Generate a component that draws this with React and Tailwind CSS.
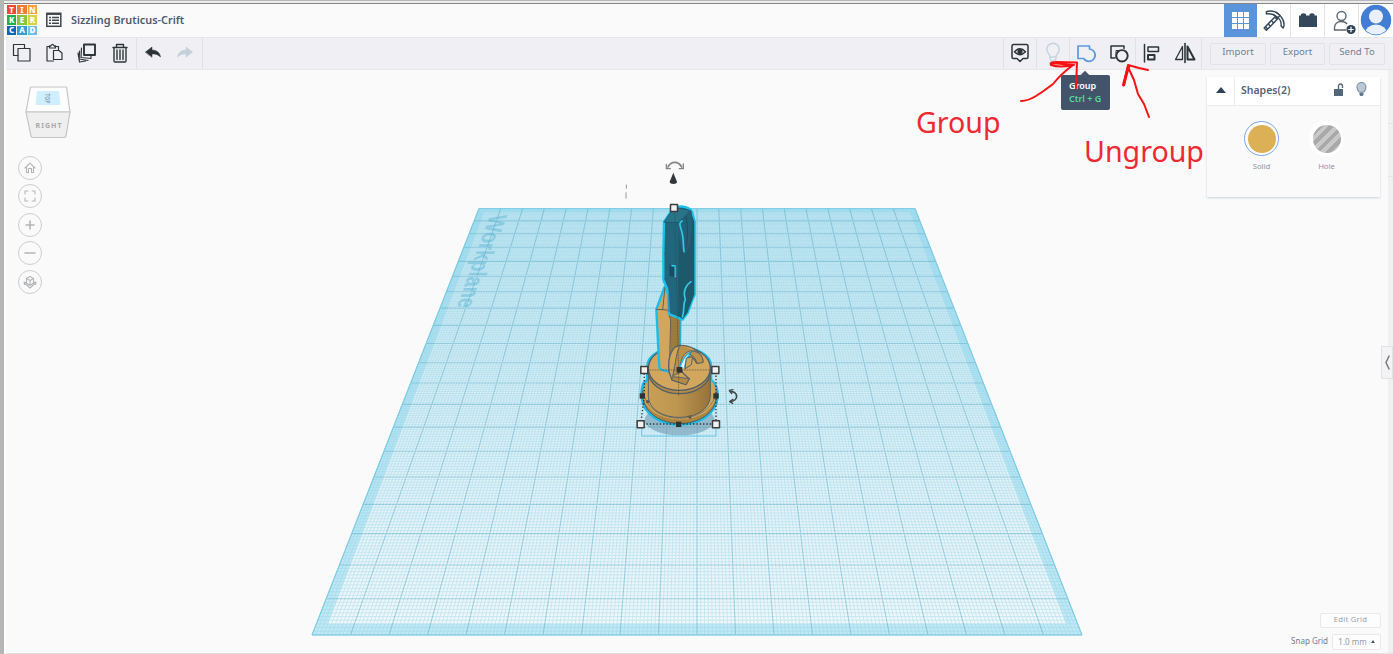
import React from "react";

const FAR_W = 770 / 436;

function project(u, t) {
  const w = FAR_W * (1 - t) + t;
  const y = (FAR_W * 208.5 * (1 - t) + 635 * t) / w;
  const k = (y - 208.5) / 426.5;
  const left = 479 - 167 * k;
  const right = 915 + 167 * k;
  return [(left + (right - left) * u).toFixed(2), y.toFixed(2)];
}

function linesPath(step, skip) {
  let d = "";
  for (let i = 0; i <= 200; i += step) {
    if (skip && i % skip === 0) continue;
    const f = i / 200;
    d += `M${project(f, 0).join(" ")}L${project(f, 1).join(" ")}`;
    d += `M${project(0, f).join(" ")}L${project(1, f).join(" ")}`;
  }
  return d;
}

const quad = (a, b) =>
  "M" + [project(a, a), project(b, a), project(b, b), project(a, b)].map((p) => p.join(" ")).join("L") + "Z";

const MINOR = linesPath(1, 10);
const MAJOR = linesPath(10, 0);
const OUTER = quad(0, 1);
const INNER = quad(0.015, 0.985);

function Handle({ x, y }) {
  return <rect x={x - 10.5} y={y - 10.5} width="21" height="21" fill="#f1f1f1" stroke="#3c3c3c" strokeWidth="4.5" />;
}

function Arm() {
  return (
    <g transform="translate(600 150) scale(.33333)" strokeLinejoin="round" strokeLinecap="round">
      <ellipse cx="239" cy="810" rx="105" ry="46" fill="#6d9ab0" opacity=".6" />
      <path d="M125 822V858H348V822" fill="none" stroke="#5fc6e8" strokeWidth="3" />
      {/* base flange and turntable */}
      <path d="M126 725C126 705 135 695 143 690V650C143 575 333 575 332 650V690C345 700 352 715 352 738C345 850 132 850 126 738Z" fill="#c99b49" stroke="#19bde9" strokeWidth="10" />
      <path d="M128 738C137 848 342 848 350 738V724C342 835 136 835 128 724Z" fill="#ad843d" stroke="#4f5a62" strokeWidth="3" />
      <ellipse cx="239" cy="732" rx="111" ry="77" fill="#d3a556" />
      <path d="M129 715C132 835 346 835 349 715" fill="none" stroke="#5d6265" strokeWidth="2" />
      <path d="M145 665V740C150 823 325 823 331 740V665Z" fill="url(#drum)" stroke="#53606a" strokeWidth="3" />
      <ellipse cx="238" cy="662" rx="94" ry="69" fill="#b58b45" stroke="#53606a" strokeWidth="4" />
      <ellipse cx="238" cy="655" rx="93" ry="66" fill="#d2a75d" stroke="#53606a" strokeWidth="4" />
      <circle cx="143" cy="755" r="5" fill="#5d594e" /><circle cx="270" cy="801" r="5" fill="#5d594e" />
      {/* lower arm */}
      <path d="M194 410L169 478L178 652C183 664 197 660 207 665L240 608L241 500Z" fill="#d1a760" stroke="#19bde9" strokeWidth="7" />
      <path d="M204 478L212 510L210 640L207 665L240 608L241 505Z" fill="#9b7b3e" />
      <path d="M169 478L203 480L212 510L208 662M195 412L188 479" fill="none" stroke="#675e4d" strokeWidth="3" />
      {/* bracket */}
      <path d="M207 665C202 618 217 587 242 586C270 586 303 600 309 635L290 640C275 608 255 620 244 644C240 660 244 668 268 686L258 704L216 690Z" fill="#d1a456" stroke="#58616a" strokeWidth="4" />
      <path d="M242 586C228 600 228 640 218 677L240 668C238 625 255 595 286 604" fill="#bb9048" stroke="#58616a" strokeWidth="3" />
      <path d="M219 680L268 686L258 704L216 690Z" fill="#b58a43" stroke="#58616a" strokeWidth="3" />
      <path d="M240 662C240 638 256 612 277 604C263 618 257 632 254 651" fill="#e2f3f9" stroke="#19bde9" strokeWidth="4" />
      <path d="M260 624L278 620L274 644L256 656Z" fill="#d1a456" stroke="#58616a" strokeWidth="3" />
      <path d="M278 603C300 606 310 620 309 638L291 640C287 626 281 618 270 613Z" fill="#bd924a" stroke="#58616a" strokeWidth="3" />
      {/* upper arm */}
      <path d="M222 170L245 169Q270 172 276 185L284 215V435C275 450 270 475 262 490L248 509L207 492L203 420L190 390V308L192 216Z" fill="#20677d" stroke="#19c3ee" strokeWidth="7" />
      <path d="M236 217L271 181L283 216V433L262 489L248 507L234 498Z" fill="#1c596a" />
      <path d="M192 216L222 172L271 181L236 217Z" fill="#287589" stroke="#1e5363" strokeWidth="2" />
      <path d="M235 225C250 200 268 185 273 183C276 220 276 285 254 310C240 275 233 240 235 225Z" fill="#1f6378" stroke="#2f5b78" strokeWidth="3" />
      <path d="M258 200C264 230 264 270 256 300" stroke="#204a5b" strokeWidth="3" fill="none" />
      <path d="M246 213C238 218 238 222 243 237C252 260 249 285 252 305M273 395C250 412 250 430 256 448C247 467 255 480 247 501" fill="none" stroke="#32c8e9" strokeWidth="5" />
      <path d="M208 343V377L225 381V349Z" fill="#174d60" />
      <path d="M216 347L226 348V380" fill="none" stroke="#32c8e9" strokeWidth="5" />
      <path d="M194 310L207 335M194 385L207 410V485" fill="none" stroke="#41557c" strokeWidth="3" opacity=".7" />
      {/* selection box */}
      <path d="M224 190L236 660V735M133 660H345" fill="none" stroke="#3c4245" strokeWidth="2.5" strokeDasharray="3 5" opacity=".65" />
      <path d="M133 660V738L122 822H348V660" fill="none" stroke="#303030" strokeWidth="4" strokeDasharray="4 6" strokeLinecap="butt" />
      <g fill="#303234"><rect x="230" y="651" width="17" height="17" /><rect x="119" y="730" width="16" height="16" /><rect x="340" y="730" width="16" height="16" /><rect x="228" y="815" width="16" height="16" /></g>
      <Handle x={222} y={174} /><Handle x={133} y={660} /><Handle x={346} y={660} /><Handle x={122} y={823} /><Handle x={348} y={823} />
      <path d="M220 68L231 95C232 104 209 104 209 95Z" fill="#333638" />
      <g fill="none" stroke="#858585" strokeWidth="5"><path d="M204 51C214 32 235 33 245 51" /><path d="M199 43V56H211M250 42V56H238" strokeWidth="4" /></g>
      <g fill="none" stroke="#414546" strokeWidth="5"><path d="M391 725C415 724 417 752 392 754" /><path d="M399 719L388 721L395 731M399 748L389 755L398 760" strokeWidth="4" /></g>
      <path d="M79 105V115M78 128V145" stroke="#999" strokeWidth="3" />
    </g>
  );
}

function Scene() {
  return (
    <svg className="block h-full w-full" viewBox="6 70 1382 583" preserveAspectRatio="none">
      <defs>
        <linearGradient id="plane" x1="0" y1="0" x2="0" y2="1"><stop stopColor="#cdeaf4" /><stop offset="1" stopColor="#f2f8fa" /></linearGradient>
        <linearGradient id="drum"><stop stopColor="#c99f56" /><stop offset=".45" stopColor="#be9650" /><stop offset="1" stopColor="#96733a" /></linearGradient>
      </defs>
      <path d={OUTER} fill="url(#plane)" />
      <path d={MINOR} stroke="#74c8e2" strokeWidth="1" opacity=".33" />
      <path d={OUTER + INNER} fillRule="evenodd" fill="#87d5ec" opacity=".45" />
      <text transform="matrix(-.36 1 -1 0 490 215)" fontFamily="Liberation Sans" fontWeight="700" fontSize="25" textLength="93" lengthAdjust="spacingAndGlyphs" fill="#70bfdb" opacity=".6">Workplane</text>
      <path d={MAJOR} stroke="#55abc8" strokeWidth="1.1" opacity=".5" fill="none" />
      <path d={OUTER} fill="none" stroke="#7ccfe6" strokeWidth="1" />
      <Arm />
      <g stroke="#c4c5c6" strokeWidth="1.2" strokeLinejoin="round">
        <path d="M30.5 87H66.500L70 112H26Z" fill="#fdfdfd" />
        <path d="M26 112H70L66 136Q65.500 137.500 64 137.500H33Q31.500 137.500 31 136Z" fill="#efefef" />
      </g>
      <path d="M37 91H59L60.500 105H35.500Z" fill="#cfeefe" />
      <text transform="translate(45 93.500) rotate(90)" fontFamily="Noto Sans" fontWeight="700" fontSize="7.500" textLength="10" lengthAdjust="spacingAndGlyphs" fill="#8dabb8">TOP</text>
      <text x="35.500" y="128" fontFamily="Noto Sans" fontWeight="700" fontSize="7" textLength="26" fill="#a6a8aa">RIGHT</text>
    </svg>
  );
}

function Icon({ children, color = "#2e3538", size = 22, w = 1.5 }) {
  return (
    <svg width={size} height={size} viewBox="0 0 22 22" fill="none" stroke={color} strokeWidth={w} strokeLinejoin="round" strokeLinecap="round">
      {children}
    </svg>
  );
}

const Tool = ({ children, line, narrow }) => (
  <div className={`flex h-full shrink-0 items-center justify-center pb-px ${narrow ? "w-[32.500px]" : "w-[33px]"} ${line ? "border-l border-[#e0e2e8]" : ""}`}>{children}</div>
);

function Logo() {
  const tiles = [["T", "bg-[#f3472e]"], ["I", "bg-[#f47b35]"], ["N", "bg-[#f9a23b]"], ["K", "bg-[#1fb04b]"], ["E", "bg-[#86c63e]"], ["R", "bg-[#d8d245]"], ["C", "bg-[#0d65b6]"], ["A", "bg-[#3799d6]"], ["D", "bg-[#76bce2]"]];
  return (
    <div className="ml-[1px] grid h-[30px] w-[30px] shrink-0 grid-cols-3 grid-rows-3 gap-px">
      {tiles.map(([t, c]) => <span key={t} className={`flex items-center justify-center text-[8px] leading-none font-extrabold text-white ${c}`}>{t}</span>)}
    </div>
  );
}

function Header() {
  return (
    <header className="flex h-[33px] items-center bg-[#fafafa] pb-px">
      <Logo />
      <svg className="ml-[9px]" width="16" height="16" viewBox="0 0 16 16" fill="none" stroke="#3f464b">
        <rect x=".8" y="1.300" width="14" height="13" strokeWidth="1.500" /><path d="M1 2.200H15" strokeWidth="1.500" />
        <path d="M3 5.500H5M3 8.300H5M3 11.200H5M6 5.500H13M6 8.300H13M6 11.200H13" strokeWidth="1.500" />
      </svg>
      <h1 className="ml-[9px] w-[125px] text-[10.900px] leading-4 font-semibold whitespace-nowrap text-[#4b5b6e]">Sizzling Bruticus-Crift</h1>
      <div className="-mb-px ml-auto flex h-[33px] w-[169px]">
        <div className="flex w-[33px] items-center justify-center bg-[#5a94da]">
          <div className="grid h-[17px] w-[17px] grid-cols-3 gap-px">
            {Array.from({ length: 9 }, (_, i) => <i key={i} className="bg-white" />)}
          </div>
        </div>
        <div className="flex w-[34px] items-center justify-center border-r border-[#e2e4e7] bg-white">
          <Icon w={1.300} size={24} color="#354656">
            <path d="M4 2.500C9 .5 14.500 3 17 6.500C20 10 21 14 19.500 17.500L17.500 15.500C18 11.500 15.500 8 12.800 6.500C10 4.500 7 4 4 4.500Z" />
            <path d="M11.500 7.500L2 17.500L4 19.500L14 9.500Z" /><path d="M10.500 5L14 8.500L16.500 6L13 3" /><path d="M3.500 16.500L5 18M6 14L7.500 15.500M9 11L10.500 12.500" />
          </Icon>
        </div>
        <div className="flex w-[34px] items-center justify-center border-r border-[#e2e4e7] bg-white pb-px">
          <svg width="18" height="14" viewBox="0 0 18 14"><path d="M0 2.500H2V1Q4.500 -.7 7 1V2.500H10.500V1Q13 -.7 15.500 1V2.500H18V14H0Z" fill="#35485b" /></svg>
        </div>
        <div className="flex w-[34px] items-center justify-center border-r border-[#e2e4e7] bg-white pl-[4px]">
          <svg width="24" height="26" viewBox="0 0 24 26" fill="none" stroke="#5d6973" strokeWidth="1.400">
            <circle cx="9.500" cy="8" r="4.500" /><path d="M14 22H2.500V20C2.500 16 5 13.500 9.500 13.500C12 13.500 14 14.500 15 16" />
            <circle cx="19" cy="21.500" r="4.600" fill="#304356" stroke="none" /><path d="M19 18.800V24.200M16.300 21.500H21.700" stroke="white" strokeWidth="1.200" />
          </svg>
        </div>
        <div className="flex w-[34px] items-center justify-center bg-white pb-px">
          <svg width="32" height="32" viewBox="0 0 32 32"><defs><clipPath id="av"><circle cx="16" cy="16" r="14.500" /></clipPath></defs>
            <circle cx="16" cy="16" r="15.200" fill="#427dd5" /><g fill="#e9f0fb" clipPath="url(#av)"><circle cx="16" cy="12.500" r="7" /><ellipse cx="16" cy="30" rx="11" ry="9.500" /></g>
          </svg>
        </div>
      </div>
    </header>
  );
}

function Toolbar() {
  const btn = "flex h-[22px] items-center justify-center rounded-[2px] border border-[#e2e3e8] pb-[3px] text-[9.600px] text-[#75808d]";
  return (
    <div className="flex h-[33px] items-center border-t border-b border-[#e5e7ec] bg-[#f0f0f4]">
      <div className="flex h-full w-[130px] shrink-0">
        <Tool narrow><Icon w={1.200}><path d="M7 13.500H2.500V2.500H13.500V6.500" /><rect x="7" y="6.500" width="12" height="12.500" /></Icon></Tool>
        <Tool narrow><Icon w={1.200}><path d="M9.500 19H3V4.500H6M11 4.500H14.500V8" /><path d="M5.500 6V3.800H7Q8.500 .8 10 3.800H11.500V6Z" /><path d="M9.500 8.500H15L18 11V17.500H9.500Z" /></Icon></Tool>
        <Tool narrow><Icon w={1.200}><rect x="8" y="2.500" width="11" height="10.500" strokeWidth="1.900" /><path d="M5.500 6L5 15.500L15 16.500V14M3.500 9L3.200 17L12 18.500M2 11L3.500 20L9.500 19" /></Icon></Tool>
        <Tool narrow><Icon w={1.400}><path d="M4 5.500H18M7.500 5V2.500H14.500V5M5 5.500V19Q5 20 6 20H16Q17 20 17 19V5.500M8 8V17.500M11 8V17.500M14 8V17.500" /></Icon></Tool>
      </div>
      <div className="flex h-full w-[67px] shrink-0 border-r border-[#e0e2e8]">
        <Tool line><Icon w={.5}><path d="M3.500 10L10 5V8C15 8 18 11 18.500 15C16 12.500 13.500 12 10 12V15Z" fill="#2b3338" /></Icon></Tool>
        <Tool narrow><Icon w={.5} color="#c4cfda"><path d="M18.500 10L12 5V8C7 8 4 11 3.500 15C6 12.500 8.500 12 12 12V15Z" fill="#c4cfda" /></Icon></Tool>
      </div>
      <div className="ml-auto flex h-full shrink-0">
        <Tool line><Icon><path d="M4.500 2.500H17.500Q19 2.500 19 4V15Q19 16.500 17.500 16.500H14L11 19.500L8 16.500H4.500Q3 16.500 3 15V4Q3 2.500 4.500 2.500Z" /><path d="M5.500 9.800Q11 3.500 16.500 9.800Q11 15.500 5.500 9.800Z" /><circle cx="11" cy="9.600" r="1.900" fill="#2e3538" /></Icon></Tool>
        <Tool line><Icon color="#c5d2de" w={1.400}><path d="M8 14.500C8 12 4.800 11 4.800 7.500A6.200 6.200 0 0 1 17.200 7.500C17.200 11 14 12 14 14.500V17L12.500 19H9.500L8 17ZM8 15H14" /></Icon></Tool>
        <Tool line><Icon color="#5b98df" w={1.700}><path d="M3 4H14.500V7A6.200 6.200 0 1 1 8.700 16.500H3Z" /></Icon></Tool>
        <Tool><Icon w={1.500}><path d="M7 16H3V4H16V6.500" /><path d="M8 15.500V8.500H15" strokeWidth="1" /><circle cx="14" cy="13.800" r="5.700" strokeWidth="1.900" /></Icon></Tool>
        <Tool line><Icon w={1.500}><path d="M3.500 2.500V20" /><rect x="7" y="5" width="10.500" height="4.500" /><rect x="7" y="13" width="6.500" height="4.500" strokeWidth="2" /></Icon></Tool>
        <Tool><Icon w={1.300}><path d="M11 1.500V20.500" strokeWidth="1.600" /><path d="M8.500 4.500V17.500H1.500Z" /><path d="M13.500 4.500V17.500H20.500Z" strokeWidth="2" /></Icon></Tool>
        <div className="flex items-center gap-[4px] border-l border-[#e0e2e8] pr-[8px] pl-[8px]">
          <div className={`${btn} w-[56px]`}>Import</div>
          <div className={`${btn} w-[55px]`}>Export</div>
          <div className={`${btn} w-[56px]`}>Send To</div>
        </div>
      </div>
    </div>
  );
}

function ViewControls() {
  const icons = [
    <path key="a" d="M6 11L11 6.200L16 11M7.500 10V15.500H9.500V11.500H12.500V15.500H14.500V10" />,
    <path key="b" d="M6 9V6H9M13 6H16V9M16 13V16H13M9 16H6V13" />,
    <path key="c" d="M11 7V15M7 11H15" strokeWidth="1.600" />,
    <path key="d" d="M6 11H16" strokeWidth="1.600" />,
    <path key="e" d="M11 5.500L14.500 7.500V12L11 14.500L7.500 12V7.500ZM7.500 7.500L11 9.500L14.500 7.500M11 9.500V14.500M7 11.500L5 11M5 11L5.500 13.500M5.500 12L11 17L16.500 12M15 11.500L17 11L16.500 13.500" />,
  ];
  return (
    <div className="absolute top-[86px] left-[12px] flex flex-col gap-[4.400px]">
      {icons.map((p, i) => <div key={i} className="flex h-6 w-6 items-center justify-center rounded-full border-[1.500px] border-[#cdcdcf]"><Icon w={1.100} color="#b4b5b7">{p}</Icon></div>)}
    </div>
  );
}

function ShapePanel() {
  return (
    <section className="absolute top-[7px] right-[8px] h-[120px] w-[173px] bg-[#fafafa] shadow-[0_1px_2px_#cbd2da]">
      <div className="flex h-[29px] items-center border-b border-[#e9ecef] bg-white">
        <div className="flex h-full w-[28px] items-center justify-center border-r border-[#e9ecef] pb-[2px]"><svg width="10" height="6"><path d="M0 6L5 0L10 6Z" fill="#2e4359" /></svg></div>
        <b className="ml-[6px] text-[10.500px] font-semibold text-[#536476]">Shapes(2)</b>
        <svg className="mb-[3px] ml-auto" width="11" height="14" viewBox="0 0 11 14"><path d="M1 6H10V13H1Z" fill="#53677b" /><path d="M5.500 6V3.500Q5.500 1 7.500 1T9.500 3.500V5" fill="none" stroke="#53677b" strokeWidth="1.400" /></svg>
        <svg className="mr-[13px] mb-[3px] ml-[12px]" width="11" height="15" viewBox="0 0 11 15"><path d="M3 10Q1 7.500 1 5A4.500 4.500 0 0 1 10 5Q10 7.500 8 10Z" fill="#bac8d6" stroke="#8495a5" strokeWidth="1.200" /><path d="M3.500 10.500H7.500V13L6.500 14H4.500L3.500 13Z" fill="#61758a" /></svg>
      </div>
      <div className="flex pt-[15px] pl-[37px] text-[7.700px] text-[#8996a2]">
        <div className="flex w-[65px] flex-col items-start"><div className="flex h-[35px] w-[35px] items-center justify-center rounded-full border border-[#79a8e5] bg-white"><i className="h-[28px] w-[28px] rounded-full bg-[#dcb054]" /></div><span className="mt-[4px] w-[35px] text-center leading-3">Solid</span></div>
        <div className="flex w-[35px] flex-col items-center"><div className="flex h-[35px] w-[35px] items-center justify-center rounded-full bg-white"><i className="h-[28px] w-[28px] rounded-full bg-[repeating-linear-gradient(135deg,#c9c9c9_0px,#c9c9c9_4px,#a9a9a9_4px,#a9a9a9_8px)]" /></div><span className="mt-[4px] leading-3">Hole</span></div>
      </div>
    </section>
  );
}

export default function App() {
  return (
    <div className="relative flex h-[654px] w-[1393px] overflow-hidden bg-[#fafafa] font-['Noto_Sans',sans-serif]">
      <div className="w-[4px] shrink-0 bg-[#b5b7b5]" />
      <div className="flex min-w-0 flex-1 flex-col">
        <div className="h-[4px] shrink-0 border-b border-[#858585] bg-[linear-gradient(#b9b9b9_0,#b9b9b9_1px,#ececec_1px)]" />
        <div className="flex flex-1 flex-col border-l-2 border-white">
          <Header />
          <Toolbar />
          <div className="flex flex-1">
            <main className="relative h-[583px] w-[1382px] shrink-0">
              <Scene />
              <ViewControls />
              <ShapePanel />
              <div className="absolute right-[7px] bottom-[4px] flex flex-col items-end gap-[5px] text-[8px] text-[#718092]">
                <div className="mb-px flex h-[15px] w-[61px] items-center justify-center rounded-[2px] border border-[#e7e9ed] bg-[#fdfdfd] pb-px text-[7.600px] tracking-[.3px] text-[#96a1ad]">Edit Grid</div>
                <div className="flex h-[15px] items-center gap-[4px]"><span className="mb-[2px]">Snap Grid</span><div className="flex h-[16px] w-[49px] items-center justify-center gap-[4px] rounded-[2px] border border-[#e7e9ed] bg-[#fdfdfd] text-[#929ba5]">1.0 mm <svg width="4" height="3"><path d="M0 3L2 0L4 3Z" fill="#4d5964" /></svg></div></div>
              </div>
              <div className="absolute top-[276px] right-[-5px] flex h-[33px] w-[12px] items-center justify-center border border-[#e1e2e6] bg-[#f3f3f5]"><svg width="5" height="15"><path d="M4.300 .5L1 7.500L4.300 14.500" fill="none" stroke="#77797b" strokeWidth="1.500" /></svg></div>
            </main>
            <aside className="flex-1 bg-[#f0f0f4] pt-[53px]"><div className="h-[54px] border-y border-[#e4e5eb]" /></aside>
          </div>
          <div className="h-px shrink-0 bg-[#e2e2e4]" />
        </div>
      </div>
      <div className="absolute top-[75px] left-[1061px] flex h-[35px] w-[49px] flex-col justify-center rounded-[2px] bg-[#43546a] pb-[2px] pl-[8px] text-[9px] leading-[13px] font-semibold whitespace-nowrap">
        <i className="absolute top-[-3px] left-[21px] h-[6px] w-[6px] rotate-45 bg-[#43546a]" />
        <span className="text-white">Group</span><span className="text-[#52dc98]">Ctrl + G</span>
      </div>
      <div className="absolute top-[103px] left-[916px] text-[28.600px] leading-[38px] text-[#ee2931]">Group</div>
      <div className="absolute top-[132px] left-[1084px] text-[28.600px] leading-[38px] text-[#ee2931]">Ungroup</div>
      <svg className="absolute top-[55px] left-[1010px]" width="150" height="75" viewBox="1010 55 150 75" fill="none" stroke="#fb1111" strokeWidth="2" strokeLinejoin="round" strokeLinecap="round">
        <path d="M1021 101Q1028 101 1036 96T1053 84Q1061 74 1073 65M1073 65Q1060 68 1051 65Q1049 62 1057 62L1077 62.500L1076 88M1051 63L1074 65" />
        <path d="M1149 117L1144 104L1138 94L1134 80L1128 67M1148 70L1139 68L1128 65L1124 85L1126 74L1129 67" /><path d="M1123.500 85L1128 68" strokeWidth="3" />
      </svg>
    </div>
  );
}
